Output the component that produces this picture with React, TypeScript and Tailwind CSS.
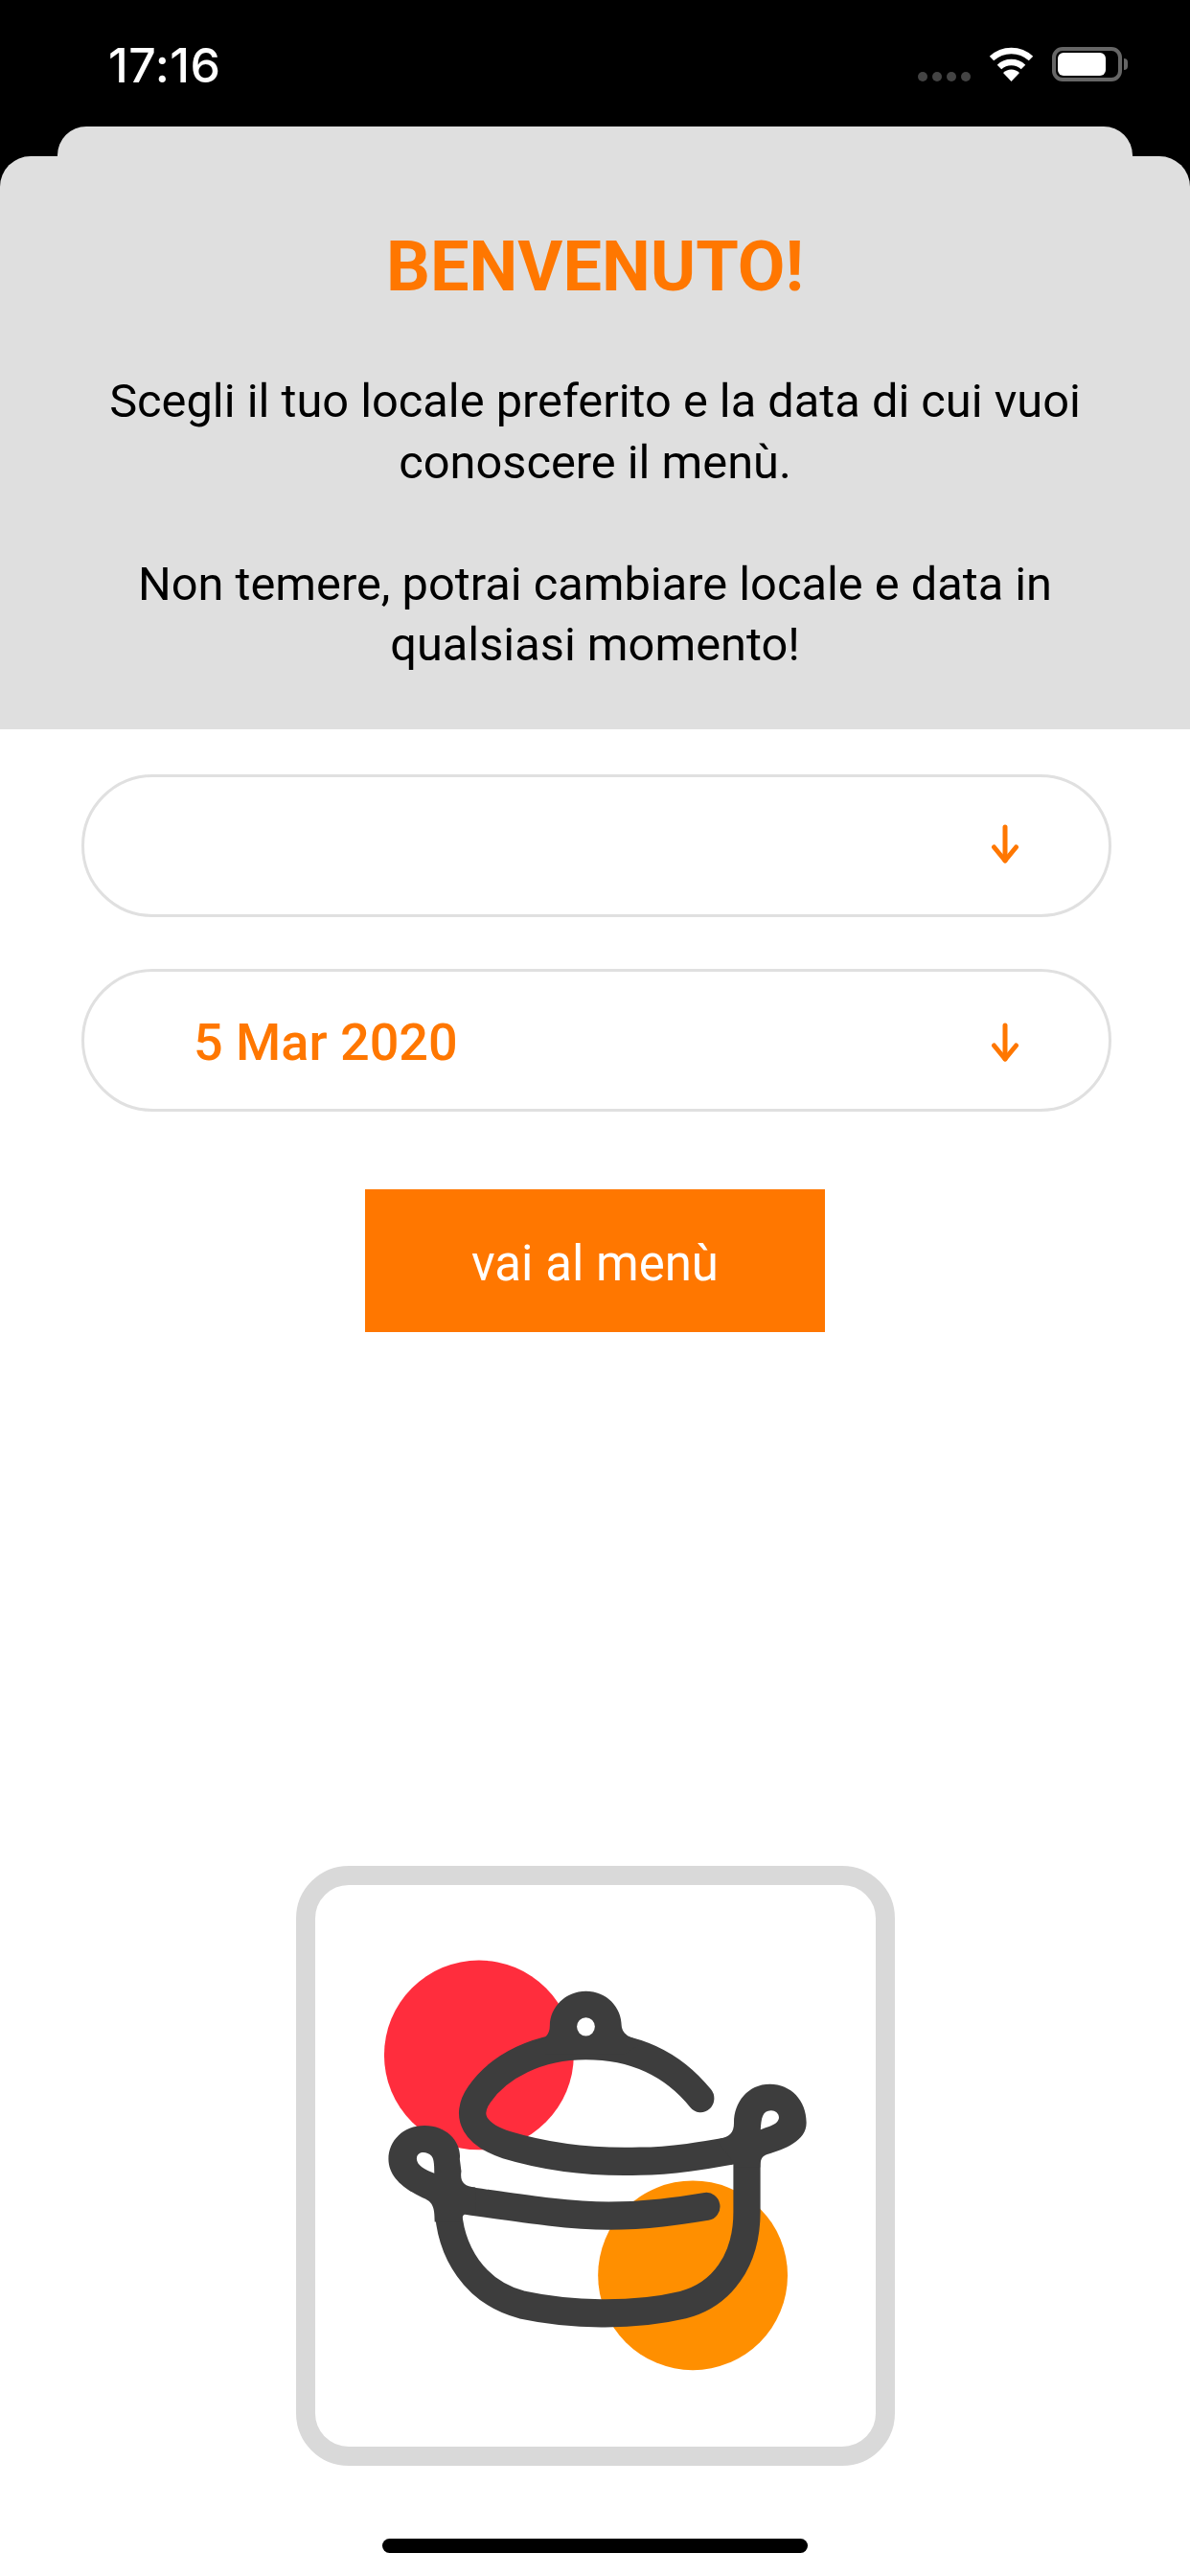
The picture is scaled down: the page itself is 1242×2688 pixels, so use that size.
import React from "react";

function Arrow({ className }: { className?: string }) {
  return (
    <svg className={className} width="30" height="42" viewBox="0 0 30 42" fill="none" stroke="#ff7700" strokeWidth="5" strokeLinecap="round" strokeLinejoin="round">
      <path d="M15 3V38" />
      <path d="M3.5 24L15 38L26.5 24" />
    </svg>
  );
}

function Pot() {
  const c = "#3d3d3d";
  return (
    <svg className="w-full h-full" viewBox="71 93 1431 1387" preserveAspectRatio="none">
      <ellipse cx="489" cy="513" rx="242" ry="234" fill="#ff2d3d" />
      <ellipse cx="1035" cy="1057" rx="242" ry="234" fill="#ff8f00" />
      <g fill="none" stroke={c} strokeWidth="69" strokeLinecap="round" strokeLinejoin="round">
        <path d="M1055 620C980 530 880 490 762 490C640 490 540 540 490 610C450 665 480 710 560 735C680 770 800 778 900 775C980 775 1060 762 1173 742" />
        <path d="M410 880C412 1000 480 1100 600 1130C720 1155 880 1160 1010 1130C1110 1105 1173 1020 1173 900V770" />
        <path d="M425 868C600 892 720 910 820 910C920 910 1000 898 1070 887" />
      </g>
      <path fill={c} d="M670 440C670 395 710 355 762 355C815 355 853 395 853 440C855 465 880 472 910 480L860 510H660L630 482C655 475 670 465 670 440Z" />
      <circle cx="762" cy="443" r="23" fill="#fff" />
      <path fill={c} fillRule="evenodd" d="M1095 722C1130 715 1140 705 1140 680C1140 630 1175 585 1232 585C1285 585 1325 625 1325 680C1325 725 1270 745 1225 758C1212 762 1207 770 1207 790H1140V780ZM1208 697C1210 670 1212 650 1235 650C1250 650 1262 665 1250 678C1240 688 1225 690 1208 697Z" />
      <path fill={c} fillRule="evenodd" d="M440 770C445 730 410 687 350 687C295 687 258 725 258 770C258 815 300 845 345 865C370 875 376 885 376 925H445C445 905 455 900 480 905V840C450 838 440 825 444 800ZM375 805C350 795 330 785 330 768C332 750 355 750 368 762C375 770 375 790 375 805Z" />
    </svg>
  );
}

function Select({ label, arrowClass }: { label?: string; arrowClass: string }) {
  return (
    <div className="h-[149px] rounded-full border-[3px] border-[#e0e0e0] flex items-center justify-between pl-[114px] pr-[93px]">
      <span className="text-[54px] font-medium text-[#ff7700] leading-none pt-[5px]">{label}</span>
      <Arrow className={arrowClass} />
    </div>
  );
}

export default function App() {
  return (
    <div className="w-[1242px] h-[2688px] bg-white flex flex-col overflow-hidden font-['Roboto',sans-serif]">
      <div className="bg-black">
        <div className="h-[132px] flex items-start justify-between pl-[113px] pr-[65px] pt-[43px]">
          <span className="text-[50px] leading-[50px] font-medium text-white font-['Inter',sans-serif] tracking-[0.5px]">17:16</span>
          <div className="flex items-end h-[36px] mt-[6px]">
            <div className="flex gap-[5px]">
              <i className="w-[10px] h-[10px] rounded-full bg-[#444]" />
              <i className="w-[10px] h-[10px] rounded-full bg-[#444]" />
              <i className="w-[10px] h-[10px] rounded-full bg-[#444]" />
              <i className="w-[10px] h-[10px] rounded-full bg-[#444]" />
            </div>
            <svg className="ml-[19px]" width="47" height="36" viewBox="0 0 47 36" fill="none">
              <path d="M3 12A30 30 0 0 1 44 12" stroke="#fff" strokeWidth="6.5" />
              <path d="M11 21A18 18 0 0 1 36 21" stroke="#fff" strokeWidth="6.5" />
              <path d="M23.5 36L15 27A12 12 0 0 1 32 27Z" fill="#fff" />
            </svg>
            <div className="ml-[19px] w-[73px] h-[36px] rounded-[11px] border-[4px] border-[#666] p-[2px]">
              <div className="w-[50px] h-full rounded-[6px] bg-white" />
            </div>
            <div className="w-[4px] h-[12px] mb-[12px] ml-[2px] rounded-r-full bg-[#666]" />
          </div>
        </div>
        <div className="mx-[60px] h-[31px] rounded-t-[30px] bg-[#dfdfdf]" />
      </div>
      <div className="bg-black">
        <div className="h-[598px] rounded-t-[32px] bg-[#dfdfdf] pt-[74px] text-center">
          <h1 className="text-[72px] leading-[84px] font-bold text-[#ff7700]">BENVENUTO!</h1>
          <p className="mt-[66px] text-[48.75px] leading-[63.5px] text-black">
            Scegli il tuo locale preferito e la data di cui vuoi
            <br />
            conoscere il menù.
            <br />
            <br />
            Non temere, potrai cambiare locale e data in
            <br />
            qualsiasi momento!
          </p>
        </div>
      </div>
      <div className="mt-[47px] ml-[85px] mr-[82px] flex flex-col gap-[54px]">
        <Select arrowClass="mb-[4px]" />
        <Select label="5 Mar 2020" arrowClass="mt-[4px]" />
      </div>
      <div className="mt-[81px] mx-auto w-[480px] h-[149px] bg-[#ff7700] flex items-center justify-center pt-[7px] text-[51px] text-white">
        vai al menù
      </div>
      <div className="mt-[557px] mx-auto w-[625px] h-[626px] rounded-[55px] border-[20px] border-[#d9d9d9]">
        <Pot />
      </div>
      <div className="mt-[76px] mx-auto w-[444px] h-[15px] rounded-full bg-black" />
    </div>
  );
}
